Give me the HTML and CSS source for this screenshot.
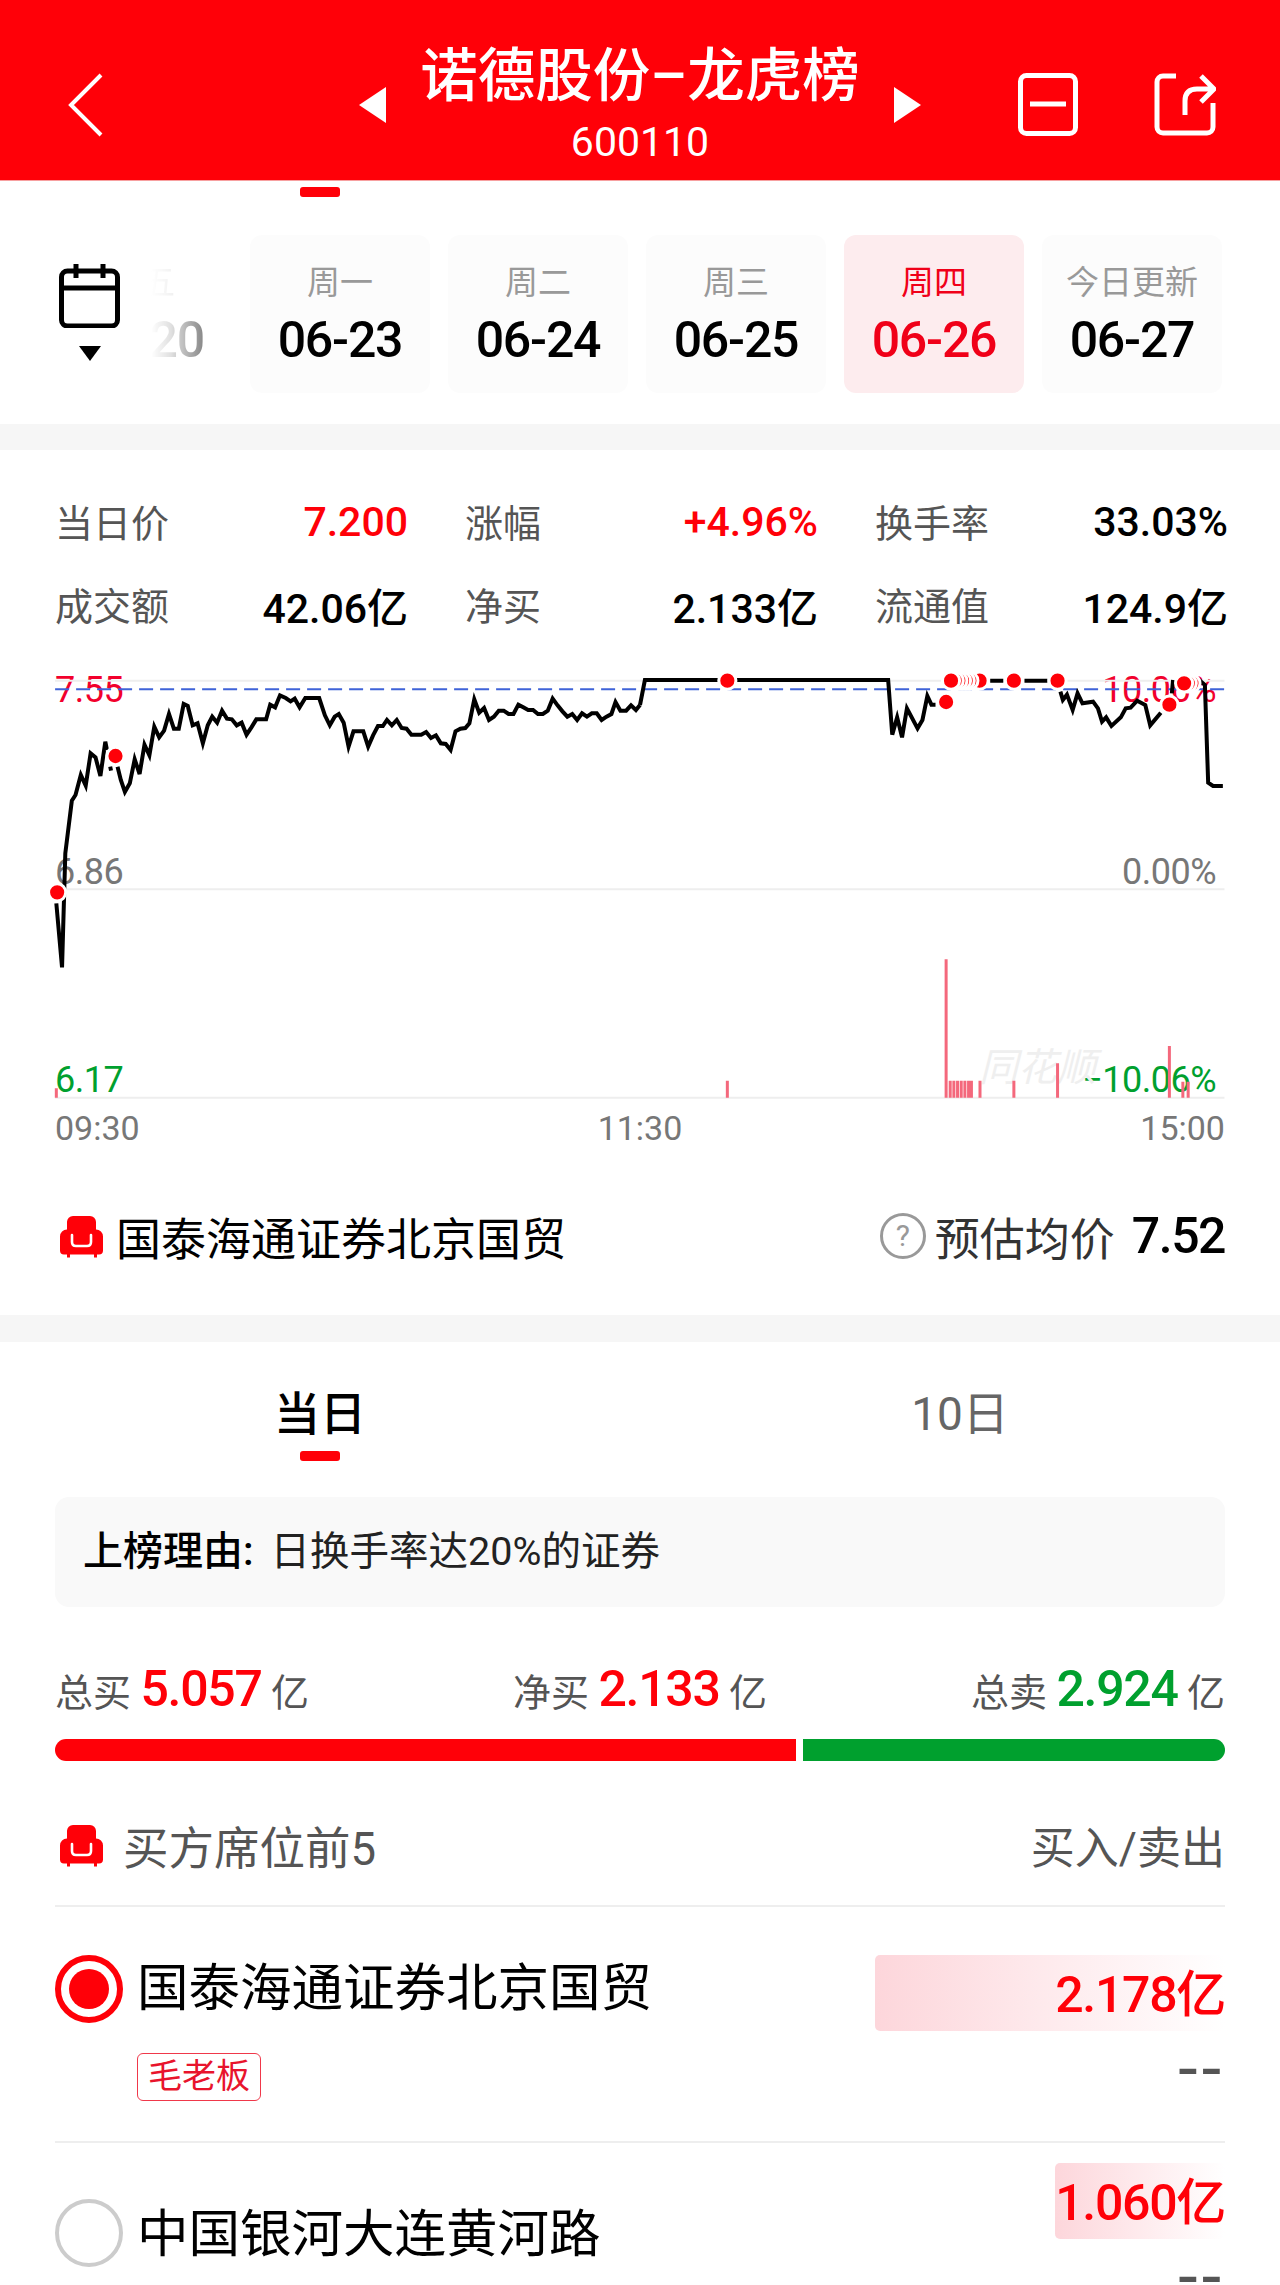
FILE: index.html
```html
<!DOCTYPE html>
<html lang="zh-CN">
<head>
    <meta charset="UTF-8">
    <meta name="viewport" content="width=device-width, initial-scale=1.0">
    <title>诺德股份-龙虎榜</title>
    <link rel="stylesheet" href="styles.css">
</head>
<body>
    <svg class="defs" width="0" height="0">
        <symbol id="seat" viewBox="0 0 43 43">
            <path fill="#ff0008" d="M7 7a6 6 0 0 1 6-6h17a6 6 0 0 1 6 6v7.500a7 7 0 0 1 7 7v14a4 4 0 0 1-4 4h-2v3h-3v-3H10v3H7v-3H4a4 4 0 0 1-4-4v-14a7 7 0 0 1 7-7z"/>
            <path fill="none" stroke="#fff" stroke-width="2.600" stroke-linecap="round" d="M12 20v7q0 4 4 4h11q4 0 4-4v-7"/>
        </symbol>
    </svg>

    <header class="topbar">
        <div class="topbar-left">
            <svg class="back" width="36" height="64" viewBox="0 0 36 64"><path d="M33 2 3 32l30 30" fill="none" stroke="#fff" stroke-width="4"/></svg>
        </div>
        <div class="topbar-title">
            <span class="tri tri-left"></span>
            <div class="title-text">
                <h1>诺德股份–龙虎榜</h1>
                <div class="code">600110</div>
            </div>
            <span class="tri tri-right"></span>
        </div>
        <div class="topbar-right">
            <svg width="60" height="63" viewBox="0 0 60 63"><rect x="2.500" y="2.500" width="55" height="58" rx="6" fill="none" stroke="#fff" stroke-width="5"/><path d="M12 31h36" stroke="#fff" stroke-width="5"/></svg>
            <svg width="62" height="63" viewBox="0 0 62 63"><path d="M22 3H9a6 6 0 0 0-6 6v45a6 6 0 0 0 6 6h44a6 6 0 0 0 6-6V30" fill="none" stroke="#fff" stroke-width="5"/><path d="M31 42V28q0-12 12-12h15M47 3l13 13-13 13" fill="none" stroke="#fff" stroke-width="5"/></svg>
        </div>
    </header>

    <section class="dates">
        <div class="tab-mark date-mark"></div>
        <div class="date-row">
            <div class="cal">
                <svg width="61" height="64" viewBox="0 0 61 64"><rect x="2.500" y="7" width="56" height="55" rx="6" fill="none" stroke="#000" stroke-width="5"/><path d="M2 24h57M17 0v14M44 0v14" stroke="#000" stroke-width="5"/></svg>
                <span class="cal-arrow"></span>
            </div>
            <div class="date-past">
                <div class="date-label">周五</div>
                <div class="date-num">06-20</div>
            </div>
            <div class="date-card"><div class="date-label">周一</div><div class="date-num">06-23</div></div>
            <div class="date-card"><div class="date-label">周二</div><div class="date-num">06-24</div></div>
            <div class="date-card"><div class="date-label">周三</div><div class="date-num">06-25</div></div>
            <div class="date-card active"><div class="date-label">周四</div><div class="date-num">06-26</div></div>
            <div class="date-card"><div class="date-label">今日更新</div><div class="date-num">06-27</div></div>
        </div>
    </section>

    <div class="band"></div>

    <section class="quote">
        <div class="stats">
            <div class="stat"><span>当日价</span><b class="up">7.200</b></div>
            <div class="stat"><span>涨幅</span><b class="up">+4.96%</b></div>
            <div class="stat"><span>换手率</span><b>33.03%</b></div>
            <div class="stat"><span>成交额</span><b>42.06亿</b></div>
            <div class="stat"><span>净买</span><b>2.133亿</b></div>
            <div class="stat"><span>流通值</span><b>124.9亿</b></div>
        </div>

        <div class="chart">
            <span class="axis left up-soft top-label">7.55</span>
            <span class="axis left mid-label">6.86</span>
            <span class="axis left down low-label">6.17</span>
            <span class="axis right up-soft top-label">10.06%</span>
            <span class="axis right mid-label">0.00%</span>
            <span class="axis right down low-label">−10.06%</span>
            <span class="watermark">同花顺</span>
            <svg class="plot" width="1280" height="465" viewBox="0 0 3136 1395" preserveAspectRatio="none">
                <path class="grid" d="M135 122H3000M135 748H3000M135 1373H3000"/>
                <path class="limit" d="M135 148H3005"/>
                <path class="bars" d="M138 1345V1373M1782 1322V1373M2318 958V1373M2328 1322V1373M2337 1322V1373M2346 1322V1373M2355 1322V1373M2364 1322V1373M2373 1322V1373M2380 1322V1373M2401 1322V1373M2484 1322V1373M2591 1270V1373M2865 1218V1373M2898 1325V1373M2911 1325V1373"/>
                <path class="line" d="M138 790 152 982 160 640 176 482 185 465 198 405 210 437 222 340 234 352 246 408 258 305 262 330M270 380 272 392M288 380 296 420 306 456 318 430 330 358 342 402 354 314 366 346 378 260 390 292 402 272 414 222 426 266 438 266 450 192 460 198 472 256 484 250 497 310 509 256 520 230 532 248 544 212 556 236 568 238 580 256 592 248 604 284 616 262 628 238 652 238 662 194 674 202 686 166 700 174 712 184 722 176 734 202 748 174 782 174 796 226 808 256 820 230 830 222 842 248 854 320 866 274 890 274 902 320 914 286 926 258 938 258 948 240 960 256 972 240 984 264 996 266 1008 284 1032 284 1044 276 1056 294 1068 286 1080 310 1092 312 1104 330 1116 274 1128 266 1140 264 1150 250 1162 178 1174 218 1186 204 1198 240 1210 230 1222 212 1234 212 1246 222 1258 222 1270 194 1282 202 1294 210 1306 210 1318 222 1330 222 1342 212 1354 176 1366 196 1378 214 1390 230 1402 222 1414 240 1426 220 1438 230 1450 220 1462 220 1474 240 1486 230 1498 222 1508 186 1520 212 1534 212 1546 196 1558 210 1568 195"/>
                <g transform="translate(1568 0)">
                    <path class="line" d="M0 195 12 120H608L618 284 630 232 642 292 654 205 680 265 692 240 704 168 714 194H724M858 122H890M942 122H998M1030 155 1036 180 1046 164 1060 210 1072 160 1084 190 1110 185 1122 205 1132 245 1142 232 1155 258 1178 232 1190 205 1202 203 1218 182 1238 195 1250 256 1276 218M1303 160 1306 120M1370 120 1384 135 1392 428 1404 438H1428"/>
                    <ellipse class="dot" cx="214" cy="122" rx="21" ry="26"/>
                    <ellipse class="dot" cx="750" cy="186" rx="21" ry="26"/>
                    <ellipse class="dot" cx="832" cy="122" rx="21" ry="26"/>
                    <ellipse class="dot" cx="807" cy="122" rx="21" ry="26"/>
                    <ellipse class="dot" cx="798" cy="122" rx="21" ry="26"/>
                    <ellipse class="dot" cx="789" cy="122" rx="21" ry="26"/>
                    <ellipse class="dot" cx="780" cy="122" rx="21" ry="26"/>
                    <ellipse class="dot" cx="771" cy="122" rx="21" ry="26"/>
                    <ellipse class="dot" cx="762" cy="122" rx="21" ry="26"/>
                    <ellipse class="dot" cx="916" cy="122" rx="21" ry="26"/>
                    <ellipse class="dot" cx="1023" cy="122" rx="21" ry="26"/>
                    <ellipse class="dot" cx="1297" cy="194" rx="21" ry="26"/>
                    <ellipse class="dot" cx="1351" cy="130" rx="21" ry="26"/>
                    <ellipse class="dot" cx="1342" cy="130" rx="21" ry="26"/>
                    <ellipse class="dot" cx="1333" cy="130" rx="21" ry="26"/>
                </g>
                <ellipse class="dot" cx="140" cy="757" rx="21" ry="26"/>
                <ellipse class="dot" cx="283" cy="348" rx="21" ry="26"/>
            </svg>
        </div>
        <div class="times"><span>09:30</span><span>11:30</span><span>15:00</span></div>

        <div class="seat-line">
            <div class="seat-name"><svg width="43" height="43"><use href="#seat"/></svg>国泰海通证券北京国贸</div>
            <div class="seat-price"><span class="help">?</span>预估均价<b>7.52</b></div>
        </div>
    </section>

    <div class="band band-wide"></div>

    <section class="board">
        <div class="tabs">
            <div class="tab active">当日<div class="tab-mark"></div></div>
            <div class="tab">10日</div>
        </div>
        <div class="reason"><b>上榜理由:</b>日换手率达20%的证券</div>
        <div class="summary">
            <div>总买 <b class="up">5.057</b> 亿</div>
            <div>净买 <b class="up">2.133</b> 亿</div>
            <div>总卖 <b class="down">2.924</b> 亿</div>
        </div>
        <div class="split">
            <div class="split-buy"></div>
            <div class="split-sell"></div>
        </div>
        <div class="list-head">
            <div class="list-title"><svg width="43" height="43"><use href="#seat"/></svg>买方席位前5</div>
            <div>买入/卖出</div>
        </div>
        <div class="row">
            <div class="row-main">
                <span class="radio on"></span>
                <div>
                    <div class="row-name">国泰海通证券北京国贸</div>
                    <span class="tag">毛老板</span>
                </div>
            </div>
            <div class="row-vals">
                <div class="amount wide">2.178亿</div>
                <div class="dash">--</div>
            </div>
        </div>
        <div class="row row-plain">
            <div class="row-main">
                <span class="radio"></span>
                <div class="row-name">中国银河大连黄河路</div>
            </div>
            <div class="row-vals">
                <div class="amount narrow">1.060亿</div>
                <div class="dash">--</div>
            </div>
        </div>
    </section>
</body>
</html>
```

FILE: styles.css
```css
:root {
    --red: #ff0008;
    --green: #00a02e;
    --line: #eeeeee;
    --band: #f6f6f6;
}

html, body {
    margin: 0;
    height: 2285px;
    overflow: hidden;
}

body {
    width: 1280px;
    background-color: #fff;
    color: #000;
    font-family: Roboto, "Noto Sans CJK SC", sans-serif;
}

.defs {
    position: absolute;
}

.up { color: var(--red); }
.up-soft { color: #f2002c; }
.down { color: var(--green); }

/* top bar */
.topbar {
    height: 181px;
    background-color: var(--red);
    color: #fff;
    display: grid;
    grid-template-columns: 1fr auto 1fr;
    box-sizing: border-box;
    border-bottom: 1px solid #f7a0a0;
}

.topbar-left {
    padding: 73px 0 0 68px;
}

.topbar-title {
    display: flex;
    align-items: flex-start;
    gap: 34px;
}

.title-text {
    text-align: center;
    padding-top: 42px;
}

.title-text h1 {
    margin: 0;
    font-size: 57.500px;
    line-height: 70px;
    font-weight: 500;
    white-space: nowrap;
}

.code {
    font-size: 41px;
    line-height: 48px;
    margin-top: 6px;
}

.tri {
    width: 0;
    height: 0;
    margin-top: 87px;
    border-top: 18px solid transparent;
    border-bottom: 18px solid transparent;
}

.tri-left { border-right: 27px solid #fff; }
.tri-right { border-left: 27px solid #fff; }

.topbar-right {
    display: flex;
    justify-content: flex-end;
    gap: 76px;
    padding: 73px 64px 0 0;
}

/* date strip */
.dates {
    height: 243px;
}

.tab-mark {
    width: 40px;
    height: 10px;
    border-radius: 3px;
    background-color: var(--red);
}

.date-mark {
    margin: 0 0 0 300px;
    position: relative;
    top: 6px;
}

.date-row {
    display: flex;
    gap: 18px;
    margin-top: 44px;
    padding-left: 59px;
}

.cal {
    width: 61px;
    padding-top: 29px;
    margin-right: 13px;
    text-align: center;
}

.cal svg {
    display: block;
}

.cal-arrow {
    display: inline-block;
    margin-top: 18px;
    border-left: 11px solid transparent;
    border-right: 11px solid transparent;
    border-top: 15px solid #000;
}

.date-past {
    width: 81px;
    overflow: hidden;
    display: flex;
    flex-direction: column;
    align-items: flex-end;
    padding-top: 28px;
    white-space: nowrap;
    -webkit-mask-image: linear-gradient(to right, transparent 0, rgba(0, 0, 0, .12) 20px, rgba(0, 0, 0, .55) 60px);
    mask-image: linear-gradient(to right, transparent 0, rgba(0, 0, 0, .12) 20px, rgba(0, 0, 0, .55) 60px);
}

.date-past .date-label { margin-right: 57px; }
.date-past .date-num { margin-right: 28px; }

.date-card {
    width: 180px;
    height: 158px;
    box-sizing: border-box;
    padding-top: 28px;
    border-radius: 12px;
    background-color: #fcfcfc;
    text-align: center;
}

.date-card.active {
    background-color: #fdecee;
    color: #f00018;
}

.date-label {
    font-size: 33px;
    line-height: 40px;
    color: #999;
}

.active .date-label {
    color: #f00018;
}

.date-num {
    font-size: 50px;
    line-height: 56px;
    font-weight: 500;
    letter-spacing: -1.200px;
    margin-top: 9px;
}

.band {
    height: 26px;
    background-color: var(--band);
}

.band-wide {
    height: 27px;
}

/* quote block */
.quote {
    height: 865px;
    box-sizing: border-box;
    padding-top: 47px;
}

.stats {
    display: grid;
    grid-template-columns: repeat(3, 353px);
    column-gap: 57px;
    row-gap: 33px;
    padding-left: 55px;
}

.stat {
    display: flex;
    justify-content: space-between;
    align-items: center;
    height: 50px;
    font-size: 38px;
    color: #555;
}

.stat span {
    margin-bottom: 4px;
}

.stat b {
    font-size: 41px;
    font-weight: 500;
    color: #000;
}

.stat b.up {
    color: var(--red);
}

.chart {
    position: relative;
    height: 465px;
    margin-top: 10px;
}

.plot {
    position: absolute;
    left: 0;
    top: 0;
}

.axis {
    position: absolute;
    font-size: 36px;
    line-height: 40px;
    letter-spacing: -.5px;
    color: #777;
}

.axis.up-soft { color: #f2002c; }
.axis.down { color: var(--green); }
.axis.left { left: 55px; }
.axis.right { right: 64px; }
.top-label { top: 30px; }
.mid-label { top: 212px; }
.low-label { top: 420px; }

.watermark {
    position: absolute;
    left: 979px;
    top: 406px;
    font-size: 39px;
    line-height: 44px;
    font-style: italic;
    color: #efefef;
}

.grid, .limit, .bars, .line, .dot {
    vector-effect: non-scaling-stroke;
    fill: none;
}

.grid {
    stroke: #eeeeee;
    stroke-width: 2;
}

.limit {
    stroke: #3f63d8;
    stroke-width: 2;
    stroke-dasharray: 14 7;
}

.bars {
    stroke: #f4687c;
    stroke-width: 3;
}

.line {
    stroke: #000;
    stroke-width: 4;
}

.dot {
    fill: var(--red);
    stroke: #fff;
    stroke-width: 3;
}

.times {
    display: flex;
    justify-content: space-between;
    height: 46px;
    padding: 0 55px;
    font-size: 34px;
    line-height: 46px;
    color: #777;
}

.seat-line {
    display: flex;
    justify-content: space-between;
    align-items: center;
    height: 60px;
    margin-top: 55px;
    padding: 0 55px 0 60px;
}

.seat-name {
    display: flex;
    align-items: center;
    gap: 13px;
    font-size: 45px;
}

.seat-price {
    display: flex;
    align-items: center;
    font-size: 45px;
    color: #333;
}

.seat-price b {
    font-size: 50px;
    font-weight: 500;
    letter-spacing: -1.500px;
    color: #000;
    margin-left: 17px;
}

.help {
    width: 40px;
    height: 40px;
    border: 3px solid #999;
    border-radius: 50%;
    margin-right: 9px;
    font-size: 30px;
    line-height: 40px;
    text-align: center;
    color: #999;
}

/* lower board */
.board {
    padding: 46px 55px 0;
}

.tabs {
    display: flex;
    margin: 0 -55px;
}

.tab {
    width: 640px;
    text-align: center;
    font-size: 46px;
    line-height: 52px;
    color: #666;
}

.tab.active {
    font-size: 46px;
    font-weight: 500;
    color: #000;
}

.tab .tab-mark {
    margin: 11px auto 0;
}

.reason {
    height: 110px;
    margin-top: 36px;
    padding-left: 28px;
    border-radius: 14px;
    background-color: #f9f9f9;
    font-size: 39.500px;
    line-height: 110px;
    color: #222;
}

.reason b {
    font-weight: 500;
    color: #000;
    font-size: 40px;
    margin-right: 17px;
}

.summary {
    display: flex;
    justify-content: space-between;
    height: 60px;
    margin-top: 52px;
    font-size: 38px;
    line-height: 60px;
    color: #555;
}

.summary b {
    font-size: 50px;
    font-weight: 500;
    letter-spacing: -1.300px;
}

.split {
    display: flex;
    gap: 7px;
    height: 22px;
    margin-top: 20px;
}

.split-buy {
    width: 741px;
    background-color: var(--red);
    border-radius: 11px 0 0 11px;
}

.split-sell {
    flex: 1;
    background-color: var(--green);
    border-radius: 0 11px 11px 0;
}

.list-head {
    display: flex;
    justify-content: space-between;
    align-items: center;
    height: 60px;
    margin-top: 54px;
    padding-bottom: 30px;
    border-bottom: 2px solid var(--line);
    font-size: 44px;
    color: #555;
}

.list-title {
    display: flex;
    align-items: center;
    gap: 20px;
    padding-left: 5px;
    font-size: 45.500px;
}

.row {
    display: flex;
    justify-content: space-between;
    height: 236px;
    box-sizing: border-box;
    padding-top: 48px;
    border-bottom: 2px solid var(--line);
}

.row-plain {
    padding-top: 20px;
    border-bottom: 0;
}

.row-main {
    display: flex;
    gap: 14px;
}

.row-plain .row-main {
    margin-top: 36px;
}

.radio {
    width: 68px;
    height: 68px;
    box-sizing: border-box;
    border: 4px solid #ccc;
    border-radius: 50%;
}

.radio.on {
    border: 6px solid var(--red);
    position: relative;
}

.radio.on::after {
    content: "";
    position: absolute;
    left: 8px;
    top: 8px;
    width: 40px;
    height: 40px;
    border-radius: 50%;
    background-color: var(--red);
}

.row-name {
    font-size: 51.500px;
    line-height: 68px;
}

.row-plain .row-name {
    line-height: 72px;
}

.tag {
    display: inline-block;
    margin-top: 30px;
    padding: 0 10px;
    height: 46px;
    border: 1.500px solid #f0384a;
    border-radius: 6px;
    font-size: 34px;
    line-height: 44px;
    color: #e8142c;
}

.row-vals {
    display: flex;
    flex-direction: column;
    align-items: flex-end;
}

.amount {
    height: 76px;
    box-sizing: border-box;
    border-radius: 5px;
    text-align: right;
    font-size: 50px;
    font-weight: 500;
    letter-spacing: -1.300px;
    line-height: 80px;
    white-space: nowrap;
    color: var(--red);
    background: linear-gradient(to right, #fdd6db, #ffffff);
}

.amount.wide { width: 350px; }
.amount.narrow { width: 170px; }

.dash {
    margin-top: 13px;
    font-size: 70px;
    line-height: 50px;
    letter-spacing: 4px;
    color: #555;
}
```
